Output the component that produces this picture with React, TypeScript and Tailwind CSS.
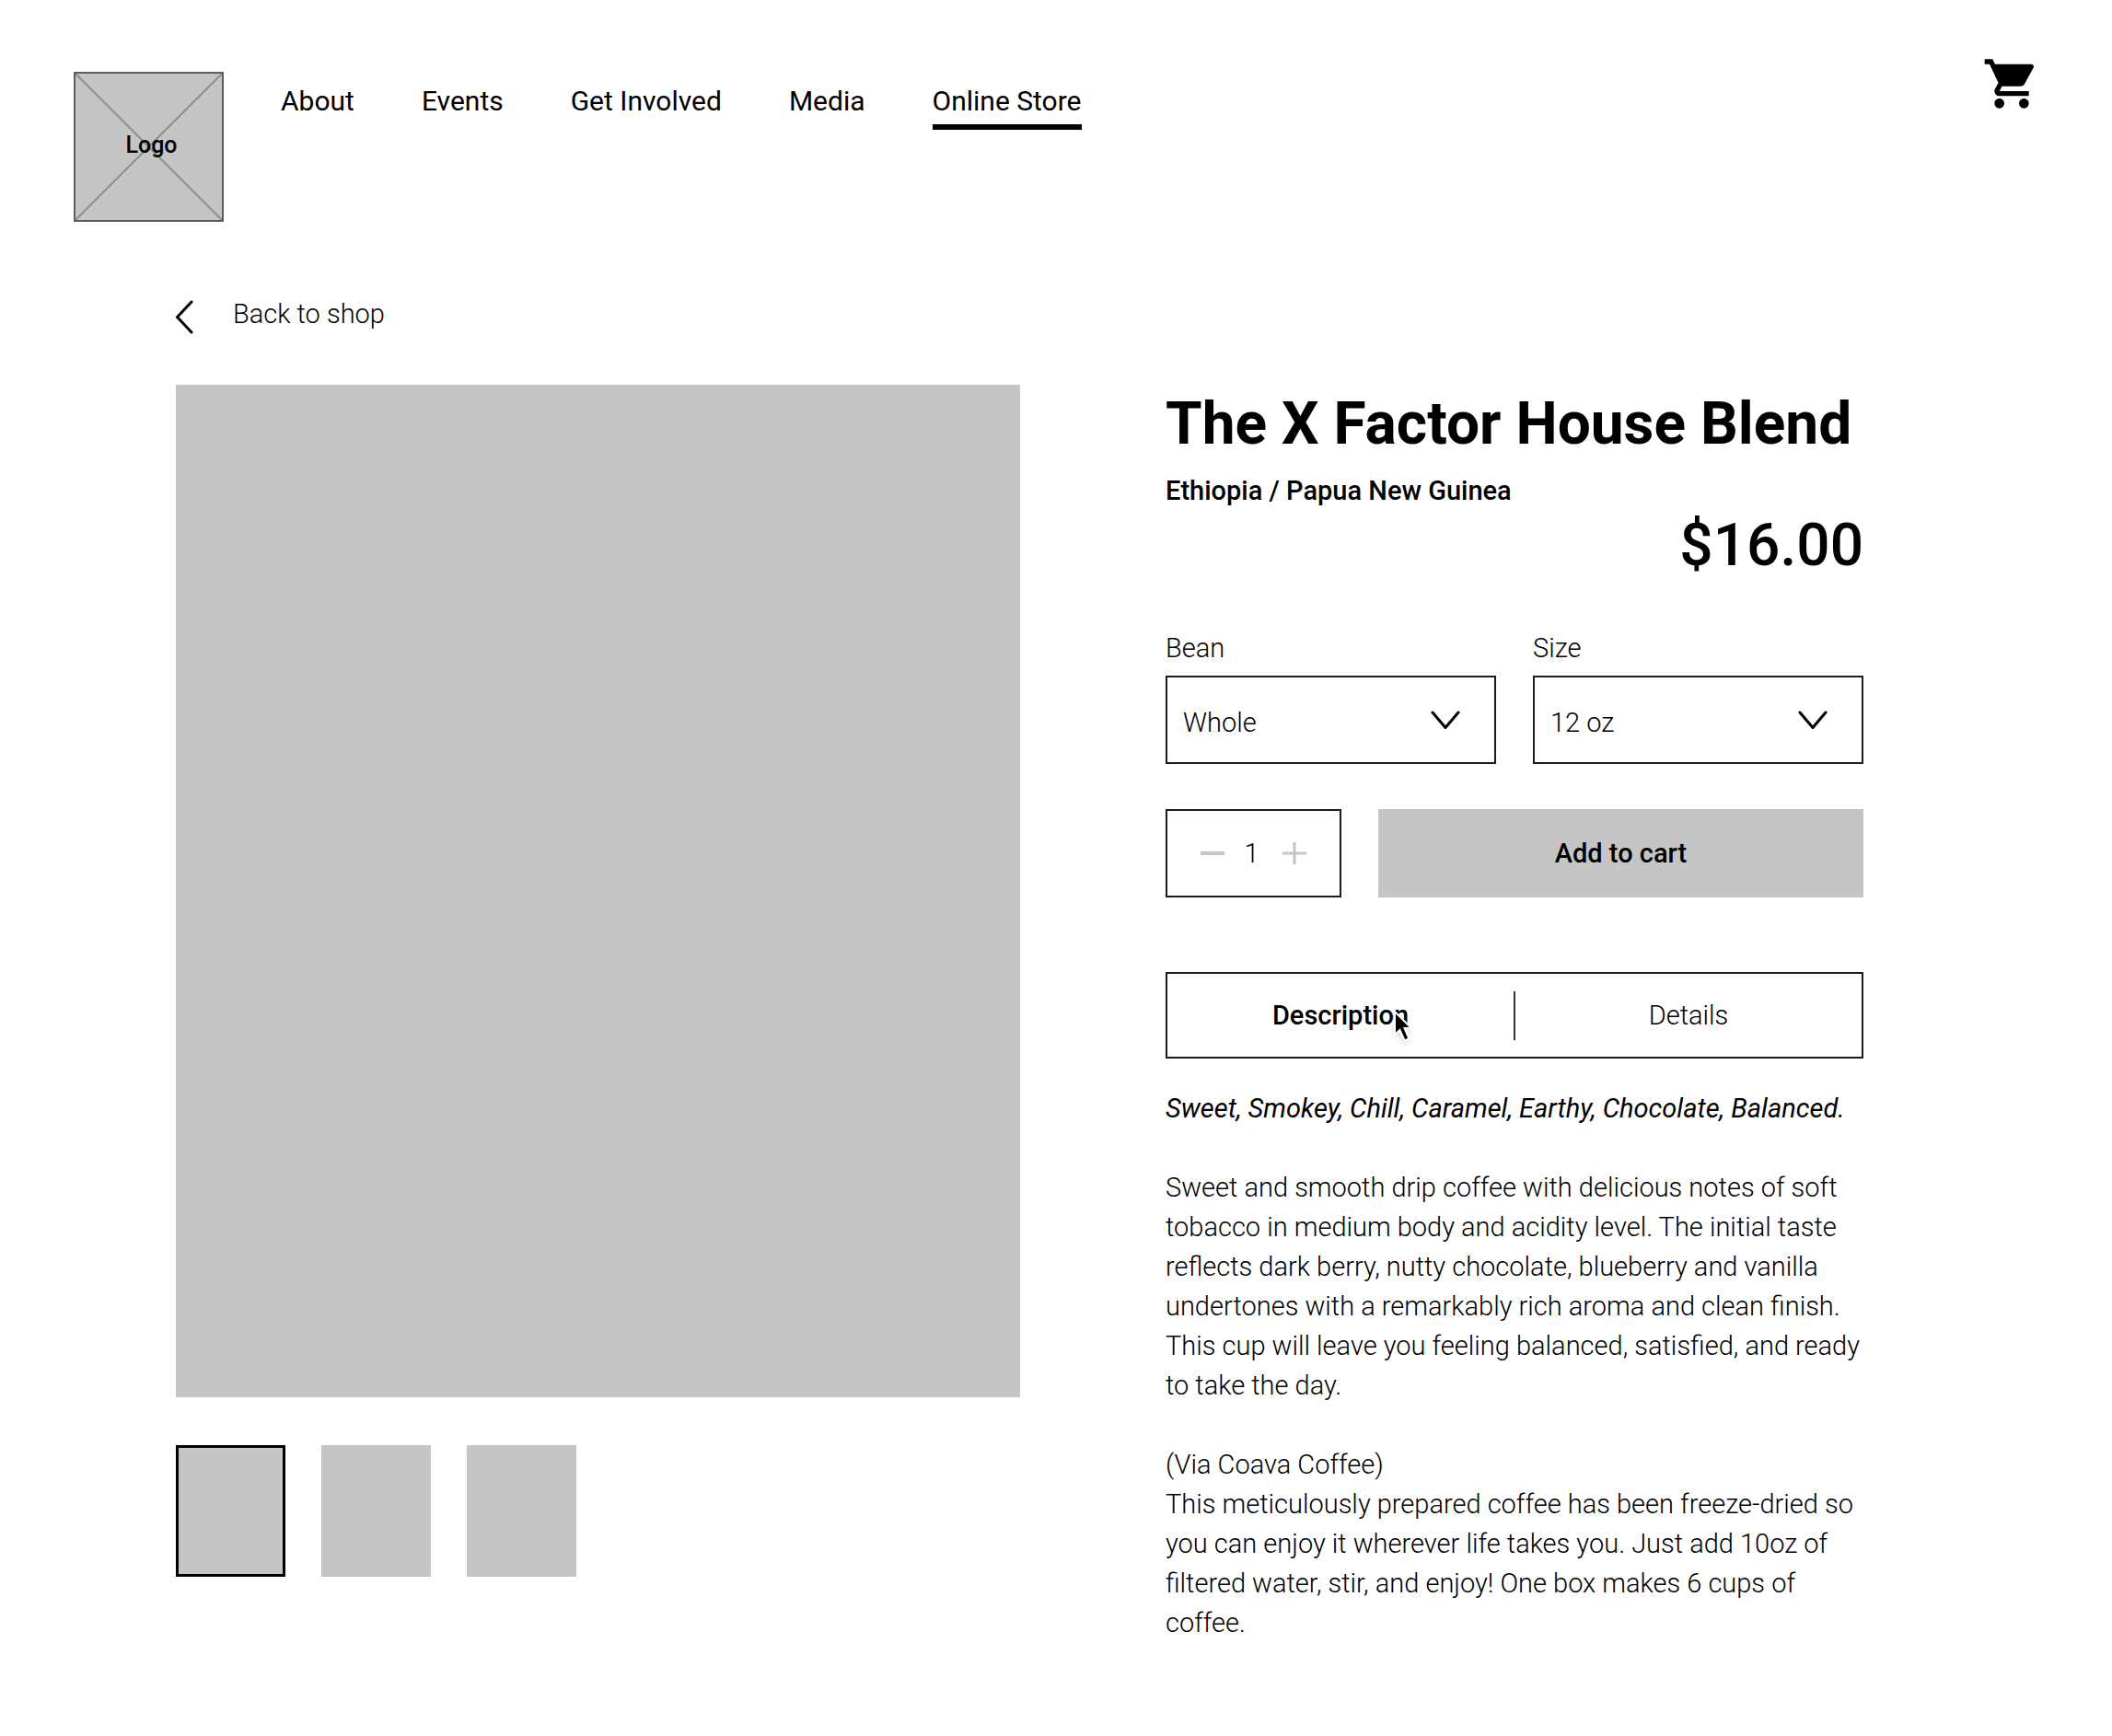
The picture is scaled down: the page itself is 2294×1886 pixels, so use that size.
import { useState } from "react";

const navLinks = ["About", "Events", "Get Involved", "Media", "Online Store"];

function Logo() {
  return (
    <a href="#home" className="relative flex size-[163px] shrink-0 items-center justify-center border-2 border-[#5c5c5c] bg-[#c5c5c5] pb-1 pl-1.5 text-[25px] font-medium">
      <svg viewBox="0 0 159 159" className="absolute inset-0 size-full" aria-hidden="true">
        <path d="M0 0L159 159M159 0L0 159" stroke="#8e8e8e" strokeWidth="2" />
      </svg>
      <span className="relative">Logo</span>
    </a>
  );
}

function Header() {
  return (
    <header className="flex items-start pl-20 pr-[77px]">
      <div className="pt-[78px]">
        <Logo />
      </div>
      <nav className="flex gap-[73px] pl-[62px] pt-[92px] text-[30px] leading-9">
        {navLinks.map((label) => (
          <a
            key={label}
            href="#nav"
            aria-current={label === "Online Store" ? "page" : undefined}
            className="border-b-[6px] border-transparent pb-[7px] whitespace-nowrap aria-[current=page]:border-black"
          >
            {label}
          </a>
        ))}
      </nav>
      <button type="button" aria-label="Shopping cart" className="ml-auto mt-[59px]">
        <svg viewBox="0 0 24 24" className="size-16" aria-hidden="true">
          <path d="M7 18c-1.1 0-1.99.9-1.99 2S5.9 22 7 22s2-.9 2-2-.9-2-2-2zM1 2v2h2l3.6 7.59-1.35 2.45c-.16.28-.25.61-.25.96 0 1.1.9 2 2 2h12v-2H7.42c-.14 0-.25-.11-.25-.25l.03-.12.9-1.63h7.45c.75 0 1.41-.41 1.75-1.03l3.58-6.49c.08-.14.12-.31.12-.48 0-.55-.45-1-1-1H5.21l-.94-2H1zm16 16c-1.1 0-1.99.9-1.99 2s.89 2 1.99 2 2-.9 2-2-.9-2-2-2z" />
        </svg>
      </button>
    </header>
  );
}

function SelectField({ id, label, options }: { id: string; label: string; options: string[] }) {
  return (
    <div className="flex min-w-0 flex-1 flex-col gap-3">
      <label htmlFor={id}>{label}</label>
      <div className="relative">
        <select id={id} className="h-24 w-full appearance-none border-2 border-[#1c1c1c] bg-transparent pl-[17px] pt-1.5 font-light">
          {options.map((option) => (
            <option key={option}>{option}</option>
          ))}
        </select>
        <svg viewBox="0 0 32 22" className="pointer-events-none absolute right-[39px] top-[38px] h-[22px] w-8" fill="none" aria-hidden="true">
          <path d="M2 2L16 18.500L30 2" stroke="black" strokeWidth="3" strokeLinecap="round" strokeLinejoin="round" />
        </svg>
      </div>
    </div>
  );
}

function Gallery() {
  const [active, setActive] = useState(0);
  return (
    <section aria-label="Product images">
      <div className="aspect-[917/1100] w-full bg-[#c5c5c5]" />
      <div className="mt-[52px] flex gap-[39px]">
        {[0, 1, 2].map((index) => (
          <button
            key={index}
            type="button"
            aria-label={`Image ${index + 1}`}
            aria-pressed={active === index}
            onClick={() => setActive(index)}
            className="h-[143px] w-[119px] border-black bg-[#c5c5c5] aria-pressed:border-[3px]"
          />
        ))}
      </div>
    </section>
  );
}

function Pointer() {
  return (
    <svg viewBox="0 0 24 36" className="pointer-events-none absolute -right-1.5 top-3 h-9 w-6 drop-shadow-md" aria-hidden="true">
      <path d="M3 2V27L8.500 22L13.500 33.500L18.500 31.500L13.500 20H21Z" fill="black" stroke="white" strokeWidth="2" />
    </svg>
  );
}

function ProductDetails() {
  const [quantity, setQuantity] = useState(1);
  return (
    <section className="flex flex-col pt-[5px]">
      <h1 className="text-[64px] leading-[76px] font-bold whitespace-nowrap">The X Factor House Blend</h1>
      <p className="mt-[13px] leading-[43px] font-medium">Ethiopia / Papua New Guinea</p>
      <p className="text-right text-[64px] leading-[76px] font-medium">$16.00</p>

      <div className="mt-[55px] flex gap-10">
        <SelectField id="bean" label="Bean" options={["Whole", "Ground"]} />
        <SelectField id="size" label="Size" options={["12 oz", "24 oz"]} />
      </div>

      <div className="mt-[49px] flex h-24 gap-10">
        <div className="flex w-[191px] shrink-0 items-center justify-between border-2 border-[#1c1c1c] px-9">
          <button type="button" aria-label="Decrease quantity" onClick={() => setQuantity(Math.max(1, quantity - 1))}>
            <svg viewBox="0 0 26 24" className="h-6 w-[26px]" aria-hidden="true">
              <path d="M0 12H26" stroke="#c5c5c5" strokeWidth="4" />
            </svg>
          </button>
          <input
            aria-label="Quantity"
            value={quantity}
            onChange={(event) => setQuantity(Number(event.target.value) || 1)}
            className="w-8 bg-transparent pr-1 text-center"
          />
          <button type="button" aria-label="Increase quantity" onClick={() => setQuantity(quantity + 1)}>
            <svg viewBox="0 0 26 24" className="h-6 w-[26px]" aria-hidden="true">
              <path d="M0 12H26M13 0V24" stroke="#c5c5c5" strokeWidth="3" />
            </svg>
          </button>
        </div>
        <button type="button" className="flex-1 bg-[#c5c5c5] font-medium">
          Add to cart
        </button>
      </div>

      <div role="tablist" className="mt-[81px] flex h-[94px] items-center border-2 border-[#1c1c1c]">
        <button type="button" role="tab" aria-selected="true" className="h-full flex-1 font-medium">
          <span className="relative inline-block">
            Description
            <Pointer />
          </span>
        </button>
        <div className="h-[53px] w-0.5 bg-[#333]" />
        <button type="button" role="tab" aria-selected="false" className="h-full flex-1">
          Details
        </button>
      </div>

      <div className="mt-[33px] leading-[43px]">
        <p className="font-normal italic">Sweet, Smokey, Chill, Caramel, Earthy, Chocolate, Balanced.</p>
        <p className="mt-[43px]">
          Sweet and smooth drip coffee with delicious notes of soft tobacco in medium body and acidity level. The
          initial taste reflects dark berry, nutty chocolate, blueberry and vanilla undertones with a remarkably rich
          aroma and clean finish. This cup will leave you feeling balanced, satisfied, and ready to take the day.
        </p>
        <p className="mt-[43px]">
          (Via Coava Coffee)
          <br />
          This meticulously prepared coffee has been freeze-dried so you can enjoy it wherever life takes you. Just add
          10oz of filtered water, stir, and enjoy! One box makes 6 cups of coffee.
        </p>
      </div>
    </section>
  );
}

export default function App() {
  return (
    <div className="min-h-screen bg-white font-['Roboto',sans-serif] text-black">
      <Header />
      <main className="pb-20 pl-[191px] pr-[270px] text-[29px] leading-9 font-light">
        <a href="#shop" className="mt-[82px] flex w-fit items-start gap-10">
          <svg viewBox="0 0 22 40" className="h-10 w-[22px]" fill="none" aria-hidden="true">
            <path d="M17 5L1.500 21.500L17 38" stroke="black" strokeWidth="3" strokeLinecap="round" strokeLinejoin="round" />
          </svg>
          Back to shop
        </a>
        <div className="mt-[55px] grid grid-cols-[917fr_758fr] gap-[158px]">
          <Gallery />
          <ProductDetails />
        </div>
      </main>
    </div>
  );
}
